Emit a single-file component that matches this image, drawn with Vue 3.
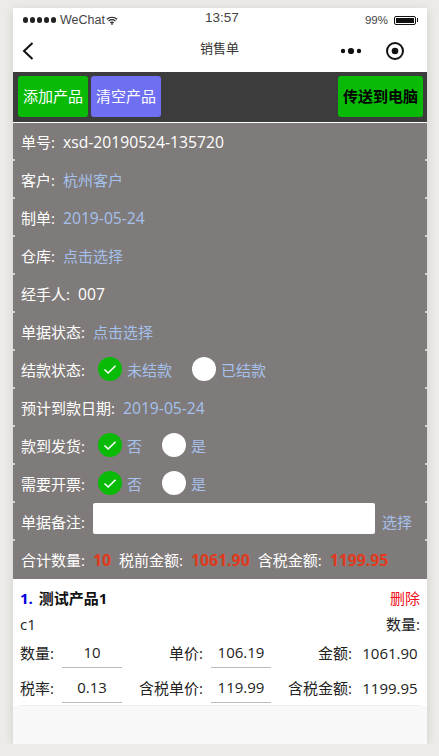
<script setup>
const plainRows = [
  { label: '单号:', value: 'xsd-20190524-135720', link: false, num: true },
  { label: '客户:', value: '杭州客户', link: true, num: false },
  { label: '制单:', value: '2019-05-24', link: true, num: true },
  { label: '仓库:', value: '点击选择', link: true, num: false },
  { label: '经手人:', value: '007', link: false, num: true },
  { label: '单据状态:', value: '点击选择', link: true, num: false },
]
</script>

<template>
  <div class="device">
    <div class="status">
      <div class="status-left">
        <span class="dots"><i></i><i></i><i></i><i></i><i></i></span>
        <span class="carrier">WeChat</span>
        <svg class="wifi" width="12" height="9" viewBox="0 0 14 10">
          <path d="M1 3.500C4.500.6 9.500.6 13 3.500M3 5.600c2.400-1.900 5.600-1.900 8 0M5 7.600c1.200-.9 2.800-.9 4 0" fill="none" stroke="#222" stroke-width="1.300"/>
          <circle cx="7" cy="9" r="1" fill="#222"/>
        </svg>
      </div>
      <div class="time">13:57</div>
      <div class="status-right">
        <span>99%</span>
        <span class="battery"><b></b></span>
      </div>
    </div>

    <div class="nav">
      <svg class="back" width="14" height="20" viewBox="0 0 14 20">
        <path d="M11.500 2 3 10l8.500 8" fill="none" stroke="#111" stroke-width="2"/>
      </svg>
      <div class="title">销售单</div>
      <div class="capsule">
        <svg width="24" height="8" viewBox="0 0 24 8">
          <circle cx="4" cy="4" r="2.200" fill="#111"/>
          <circle cx="12" cy="4" r="3.100" fill="#111"/>
          <circle cx="20" cy="4" r="2.200" fill="#111"/>
        </svg>
        <svg width="20" height="20" viewBox="0 0 20 20">
          <circle cx="10" cy="10" r="8" fill="none" stroke="#111" stroke-width="2"/>
          <circle cx="10" cy="10" r="3.300" fill="#111"/>
        </svg>
      </div>
    </div>

    <div class="toolbar">
      <button class="btn green">添加产品</button>
      <button class="btn violet">清空产品</button>
      <button class="btn send">传送到电脑</button>
    </div>

    <div class="form">
      <div v-for="row in plainRows" :key="row.label" class="row">
        <span class="label">{{ row.label }}</span>
        <span :class="[row.link ? 'link' : 'val', { num: row.num }]">{{ row.value }}</span>
      </div>

      <div class="row">
        <span class="label">结款状态:</span>
        <span class="radios">
          <span class="radio on"><svg width="14" height="11" viewBox="0 0 14 11"><path d="M1.500 5.500 5.200 9 12.500 1.800" fill="none" stroke="#fff" stroke-width="1.600"/></svg></span>
          <span class="link opt">未结款</span>
          <span class="radio second"></span>
          <span class="link opt">已结款</span>
        </span>
      </div>

      <div class="row">
        <span class="label">预计到款日期:</span>
        <span class="link num">2019-05-24</span>
      </div>

      <div class="row">
        <span class="label">款到发货:</span>
        <span class="radios">
          <span class="radio on"><svg width="14" height="11" viewBox="0 0 14 11"><path d="M1.500 5.500 5.200 9 12.500 1.800" fill="none" stroke="#fff" stroke-width="1.600"/></svg></span>
          <span class="link opt">否</span>
          <span class="radio second"></span>
          <span class="link opt">是</span>
        </span>
      </div>

      <div class="row">
        <span class="label">需要开票:</span>
        <span class="radios">
          <span class="radio on"><svg width="14" height="11" viewBox="0 0 14 11"><path d="M1.500 5.500 5.200 9 12.500 1.800" fill="none" stroke="#fff" stroke-width="1.600"/></svg></span>
          <span class="link opt">否</span>
          <span class="radio second"></span>
          <span class="link opt">是</span>
        </span>
      </div>

      <div class="row">
        <span class="label">单据备注:</span>
        <span class="note"></span>
        <span class="link pick">选择</span>
      </div>

      <div class="row totals">
        <span class="label">合计数量:</span><b class="red">10</b>
        <span class="label">税前金额:</span><b class="red">1061.90</b>
        <span class="label">含税金额:</span><b class="red">1199.95</b>
      </div>
    </div>

    <div class="product">
      <div class="p-head">
        <div class="p-name"><span class="idx">1.</span> 测试产品1</div>
        <div class="del">删除</div>
      </div>
      <div class="p-sub"><span class="spec">c1</span><span>数量:</span></div>
      <div class="p-grid">
        <span class="k k1">数量:</span><span class="inp">10</span>
        <span class="k">单价:</span><span class="inp">106.19</span>
        <span class="k">金额:</span><span class="amt">1061.90</span>
        <span class="k k1">税率:</span><span class="inp">0.13</span>
        <span class="k">含税单价:</span><span class="inp">119.99</span>
        <span class="k">含税金额:</span><span class="amt">1199.95</span>
      </div>
    </div>
    <div class="rest"></div>
  </div>
</template>

<style scoped>
.device {
  width: 414px;
  height: 736px;
  margin: 8px 0 0 13px;
  background: #f8f8f8;
  box-shadow: 0 2px 10px rgba(0, 0, 0, 0.12);
  display: flex;
  flex-direction: column;
  font-family: "Open Sans", "Noto Sans CJK SC", sans-serif;
  overflow: hidden;
}
.status {
  height: 24px;
  background: #fff;
  display: flex;
  align-items: center;
  justify-content: space-between;
  padding: 0 9px 0 10px;
  font-family: "Liberation Sans", sans-serif;
  font-size: 12px;
  color: #444;
  position: relative;
}
.status-left { display: flex; align-items: center; }
.dots { display: flex; gap: 1.500px; margin-right: 4px; }
.dots i { width: 5.400px; height: 5.400px; border-radius: 50%; background: #222; }
.carrier { font-size: 12.500px; }
.wifi { margin-left: 1px; }
.time { font-size: 13.500px; position: absolute; left: 192px; top: 2px; }
.status-right { display: flex; align-items: center; gap: 6px; font-size: 11.500px; }
.battery {
  width: 22px; height: 9px; border: 1px solid #111; border-radius: 2px;
  padding: 1px; box-sizing: border-box; display: block; margin-right: 2px; position: relative;
}
.battery b { display: block; height: 100%; background: #111; }
.battery::after {
  content: ""; position: absolute; right: -3px; top: 1.500px; width: 1.500px; height: 4px; background: #111;
}
.nav {
  height: 40px;
  background: #fff;
  display: flex;
  align-items: center;
  justify-content: space-between;
  padding: 0 22px 2px 8px;
  box-sizing: border-box;
  position: relative;
}
.title {
  position: absolute; left: 187px; top: 7px;
  font-size: 13px; color: #333; line-height: 18px;
}
.capsule { display: flex; align-items: center; gap: 22px; }
.toolbar {
  background: #3d3c3d;
  border-bottom: 1px solid #fff;
  display: flex;
  align-items: flex-start;
  padding: 4px 4px 0 5px;
  box-sizing: border-box;
  height: 51px;
  gap: 3px;
}
.btn {
  width: 70px; height: 41px; border: 0; border-radius: 3px;
  font: 15px "Open Sans", "Noto Sans CJK SC", sans-serif;
  padding: 0 0 2px; color: #fff;
}
.green { background: #09bb07; }
.violet { background: #6f6ff2; }
.send { width: 85px; margin-left: auto; background: #09bb07; color: #000; font-weight: 700; }
.form {
  background: #7f7b7a;
  height: 456px;
  font-size: 15px;
  color: #fff;
}
.row {
  height: 38px;
  display: flex;
  align-items: center;
  padding: 0 0 2px 8px;
  box-sizing: border-box;
  white-space: nowrap;
  background:
    linear-gradient(#d4d2d0, #d4d2d0) left bottom / 2px 2px no-repeat,
    linear-gradient(#d4d2d0, #d4d2d0) right bottom / 2px 2px no-repeat;
}
.row:last-child { background: none; }
.label { color: #fff; margin-right: 8px; }
.val { color: #fff; }
.link { color: #a5c0ec; }
.num { font-size: 15.700px; margin-top: 2px; }
.radios { display: flex; align-items: center; margin-left: 5px; }
.radio {
  width: 24px; height: 24px; border-radius: 50%; background: #fff;
  display: flex; align-items: center; justify-content: center; flex: none;
}
.radio.on { background: #09bb07; }
.opt { margin-left: 5px; }
.second { margin-left: 20px; }
.note {
  width: 282px; height: 31px; background: #fff; border-radius: 2px; align-self: flex-start;
}
.pick { margin-left: 7px; }
.red { color: #e0391c; font-weight: 700; font-size: 15.800px; margin-right: 8px; margin-top: 1px; }
.product {
  height: 127px;
  background: #fff;
  padding: 0 7px;
  box-sizing: border-box;
  font-size: 15px;
  color: #222;
}
.p-head {
  height: 36px; display: flex; justify-content: space-between; align-items: center; padding-top: 1px; box-sizing: border-box;
}
.p-name { font-weight: 700; color: #111; }
.idx { color: #0000e0; margin-right: 2px; }
.del { color: #f01020; }
.p-sub {
  display: flex; justify-content: space-between; height: 18px; line-height: 18px;
}
.p-grid {
  display: grid;
  grid-template-columns: 34px 60px 73px 60px 73px 60px;
  column-gap: 8px;
  grid-auto-rows: 35px;
  padding-bottom: 2px;
  border-bottom: 1px solid #eee;
}
.k { text-align: right; line-height: 41px; white-space: nowrap; }
.k1 { text-align: left; }
.inp {
  text-align: center; line-height: 38px; border-bottom: 1px solid #bbb; box-sizing: border-box;
}
.amt { text-align: center; line-height: 41px; }
.rest { flex: 1; background: #f8f8f8; }
</style>

<style>
body { background: #ecebe7; }
</style>
